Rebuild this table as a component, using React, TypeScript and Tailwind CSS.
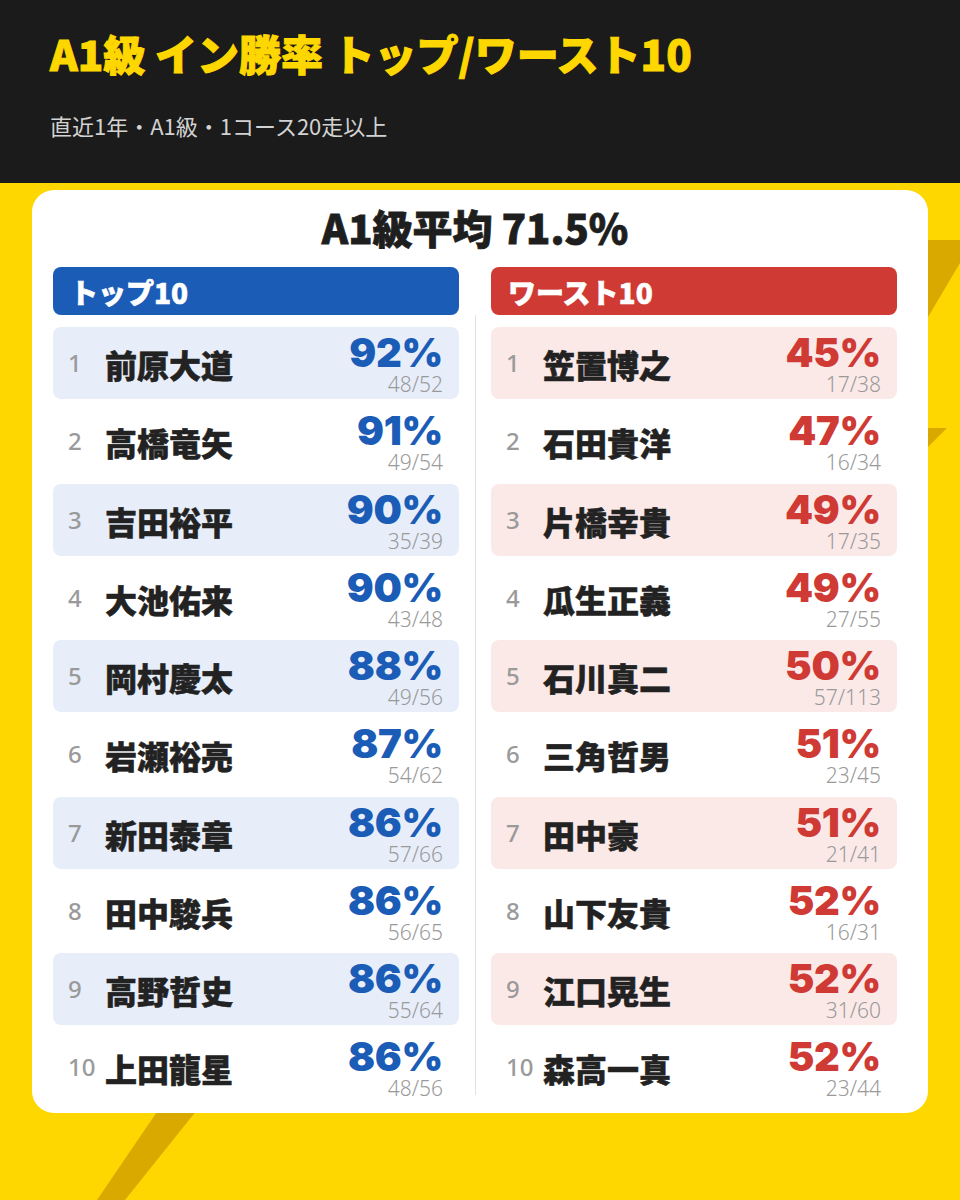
import React from "react";

type Row = { name: string; pct: string; frac: string };

const top: Row[] = [
  { name: "前原大道", pct: "92%", frac: "48/52" },
  { name: "高橋竜矢", pct: "91%", frac: "49/54" },
  { name: "吉田裕平", pct: "90%", frac: "35/39" },
  { name: "大池佑来", pct: "90%", frac: "43/48" },
  { name: "岡村慶太", pct: "88%", frac: "49/56" },
  { name: "岩瀬裕亮", pct: "87%", frac: "54/62" },
  { name: "新田泰章", pct: "86%", frac: "57/66" },
  { name: "田中駿兵", pct: "86%", frac: "56/65" },
  { name: "高野哲史", pct: "86%", frac: "55/64" },
  { name: "上田龍星", pct: "86%", frac: "48/56" },
];

const worst: Row[] = [
  { name: "笠置博之", pct: "45%", frac: "17/38" },
  { name: "石田貴洋", pct: "47%", frac: "16/34" },
  { name: "片橋幸貴", pct: "49%", frac: "17/35" },
  { name: "瓜生正義", pct: "49%", frac: "27/55" },
  { name: "石川真二", pct: "50%", frac: "57/113" },
  { name: "三角哲男", pct: "51%", frac: "23/45" },
  { name: "田中豪", pct: "51%", frac: "21/41" },
  { name: "山下友貴", pct: "52%", frac: "16/31" },
  { name: "江口晃生", pct: "52%", frac: "31/60" },
  { name: "森高一真", pct: "52%", frac: "23/44" },
];

const jp = { fontFamily: '"Noto Sans CJK JP", "Noto Sans", sans-serif' };
const num = { fontFamily: 'Inter, "Noto Sans", sans-serif' };
const light = { fontFamily: '"Noto Sans", Roboto, sans-serif' };

function Column({ title, rows, kind }: { title: string; rows: Row[]; kind: "top" | "worst" }) {
  const isTop = kind === "top";
  return (
    <div className="flex w-[406px] flex-col">
      <div
        className={
          "flex h-[48px] items-center rounded-[8px] pl-[17px] text-[28px] font-black leading-none text-white [-webkit-text-stroke:0.6px_#ffffff] " +
          (isTop ? "bg-[#1b5cb7]" : "bg-[#cf3a34]")
        }
        style={jp}
      >
        <span className="pt-[1px]">{title}</span>
      </div>
      <div className="mt-[12px] flex flex-col gap-[6.25px]">
        {rows.map((r, i) => {
          const shaded = i % 2 === 0;
          return (
            <div
              key={i}
              className={
                "flex h-[72px] items-center rounded-[8px] pl-[15px] pr-[16px] " +
                (shaded ? (isTop ? "bg-[#e7eefa]" : "bg-[#fbe9e8]") : "bg-transparent")
              }
            >
              <div
                className="w-[37px] shrink-0 text-[24px] font-medium leading-none text-[#9a9a9a]"
                style={light}
              >
                {i + 1}
              </div>
              <div
                className="flex-1 pt-[2px] text-[32px] font-black leading-none text-[#222222] [-webkit-text-stroke:0.5px_#222222]"
                style={jp}
              >
                {r.name}
              </div>
              <div className="flex flex-col items-end pt-[5px]">
                <div
                  className={
                    "text-[40px] font-black leading-[34px] tracking-[-0.3px] " +
                    (isTop ? "text-[#1b5cb7]" : "text-[#cf3a34]")
                  }
                  style={num}
                >
                  {r.pct}
                </div>
                <div className="mt-[4px] text-[21px] font-light leading-none text-[#9a9a9a]" style={light}>
                  {r.frac}
                </div>
              </div>
            </div>
          );
        })}
      </div>
    </div>
  );
}

export default function App() {
  return (
    <div className="h-[1200px] w-[960px] overflow-hidden bg-[#ffd700]">
      <div className="h-[183px] bg-[#1b1b1b] px-[50px] pt-[32px]">
        <div
          className="text-[42px] font-black leading-none text-[#ffd700] [-webkit-text-stroke:1px_#ffd700]"
          style={jp}
        >
          A1級 イン勝率 トップ/ワースト10
        </div>
        <div className="mt-[40px] text-[22px] font-normal leading-none text-[#d2d2d2]" style={jp}>
          直近1年・A1級・1コース20走以上
        </div>
      </div>
      <div className="relative h-[1017px] px-[32px] pt-[7px]">
        <svg className="absolute left-0 top-0" width="960" height="1017" viewBox="0 183 960 1017">
          <polygon points="860,240 960,240 960,263 860,432" fill="#d9a900" />
          <polygon points="860,428 947,428 860,515" fill="#d9a900" />
          <polygon points="165,1100 205,1100 125,1200 97,1200" fill="#d9a900" />
        </svg>
        <div className="relative flex h-[923px] flex-col rounded-[22px] bg-white pl-[21px] pr-[31px]">
          <div
            className="pt-[17px] text-center text-[40px] font-black leading-none text-[#1e1e1e] [-webkit-text-stroke:0.8px_#1e1e1e]"
            style={jp}
          >
            A1級平均 71.5%
          </div>
          <div className="mt-[20px] flex justify-between">
            <Column title="トップ10" rows={top} kind="top" />
            <div className="mt-[48px] mb-[8px] w-[1px] bg-[#e2e2e2]" />
            <Column title="ワースト10" rows={worst} kind="worst" />
          </div>
        </div>
      </div>
    </div>
  );
}
